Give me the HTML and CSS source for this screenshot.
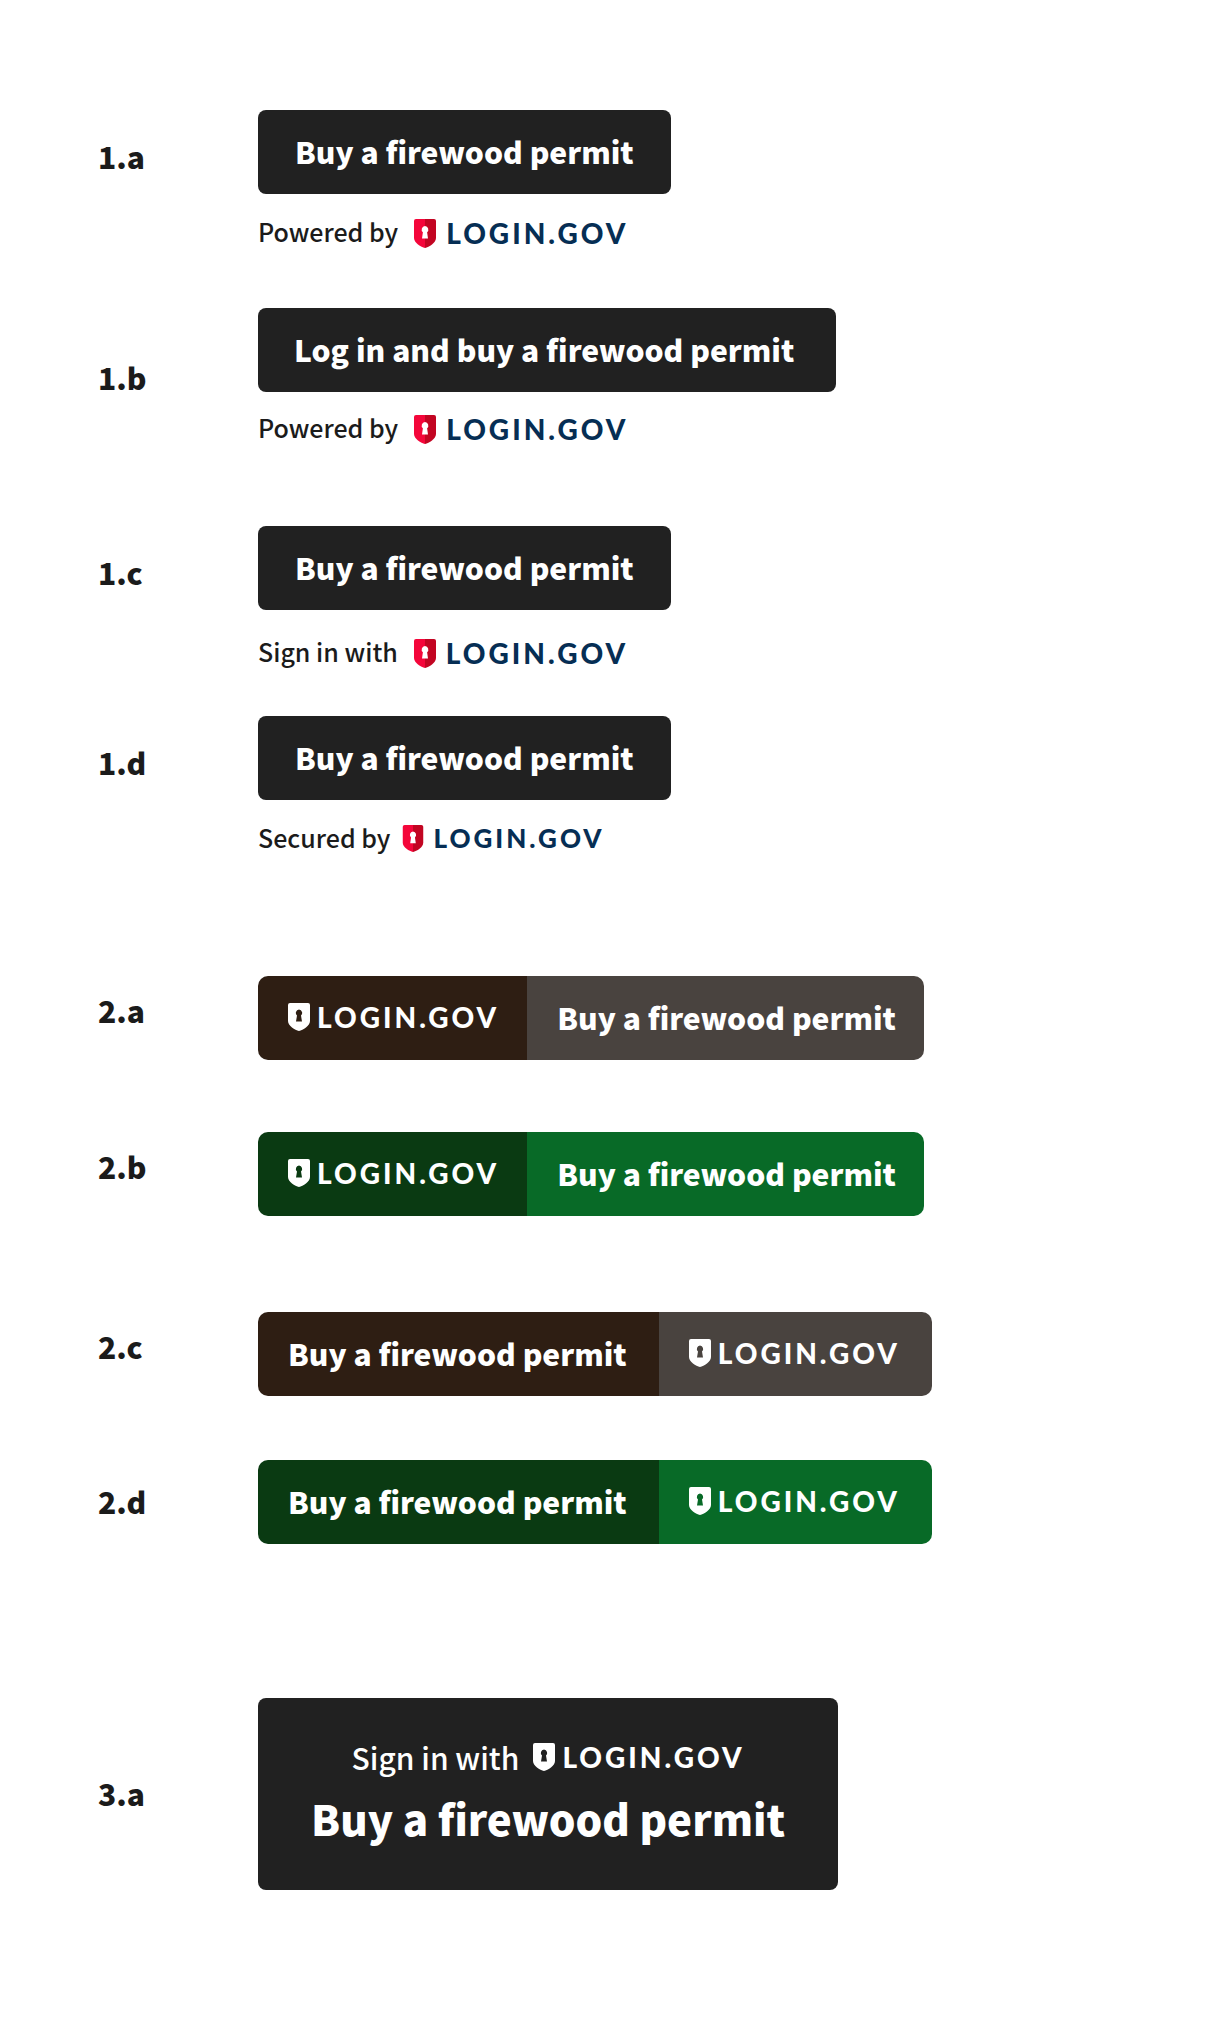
FILE: index.html
```html
<!DOCTYPE html>
<html lang="en">
<head>
  <meta charset="utf-8">
  <meta name="viewport" content="width=device-width, initial-scale=1">
  <title>Login.gov button variations</title>
  <link rel="stylesheet" href="styles.css">
</head>
<body>
  <svg class="sprite" aria-hidden="true">
    <symbol id="shield-color" viewBox="0 0 22 29">
      <path fill="#f4063a" d="M2 0H11V29C7 28 0 24 0 19V2Q0 0 2 0Z"/>
      <path fill="#c20522" d="M11 0H20Q22 0 22 2V19C22 24 15 28 11 29Z"/>
      <path fill="#fff" d="M11 7A3.6 3.6 0 0 0 8.9 13.3L8 19.5H14L13.1 13.3A3.6 3.6 0 0 0 11 7Z"/>
    </symbol>
    <symbol id="shield-white" viewBox="0 0 22 28">
      <path fill="#fff" fill-rule="evenodd" d="M2 0H20Q22 0 22 2V18C22 23 15 27 11 28C7 27 0 23 0 18V2Q0 0 2 0ZM11 6.5A3.5 3.5 0 0 0 9 12.6L8 18.5H14L13 12.6A3.5 3.5 0 0 0 11 6.5Z"/>
    </symbol>
  </svg>

  <main class="samples">
    <section class="sample sample-1a">
      <h2 class="label">1.a</h2>
      <div class="variant">
        <button class="button" type="button">Buy a firewood permit</button>
        <p class="caption">Powered by
          <span class="brand"><svg class="shield" aria-hidden="true"><use href="#shield-color"/></svg><span class="wordmark">LOGIN.GOV</span></span>
        </p>
      </div>
    </section>

    <section class="sample sample-centered sample-1b">
      <h2 class="label">1.b</h2>
      <div class="variant">
        <button class="button button-long" type="button">Log in and buy a firewood permit</button>
        <p class="caption caption-close">Powered by
          <span class="brand"><svg class="shield" aria-hidden="true"><use href="#shield-color"/></svg><span class="wordmark">LOGIN.GOV</span></span>
        </p>
      </div>
    </section>

    <section class="sample sample-1c">
      <h2 class="label">1.c</h2>
      <div class="variant">
        <button class="button" type="button">Buy a firewood permit</button>
        <p class="caption caption-loose">Sign in with
          <span class="brand"><svg class="shield" aria-hidden="true"><use href="#shield-color"/></svg><span class="wordmark">LOGIN.GOV</span></span>
        </p>
      </div>
    </section>

    <section class="sample sample-1d">
      <h2 class="label">1.d</h2>
      <div class="variant">
        <button class="button" type="button">Buy a firewood permit</button>
        <p class="caption caption-small">Secured by
          <span class="brand"><svg class="shield" aria-hidden="true"><use href="#shield-color"/></svg><span class="wordmark">LOGIN.GOV</span></span>
        </p>
      </div>
    </section>

    <section class="sample sample-split sample-2a">
      <h2 class="label">2.a</h2>
      <button class="split brown" type="button">
        <span class="part part-brand part-dark"><span class="brand brand-white"><svg class="shield" aria-hidden="true"><use href="#shield-white"/></svg><span class="wordmark">LOGIN.GOV</span></span></span>
        <span class="part part-text part-light">Buy a firewood permit</span>
      </button>
    </section>

    <section class="sample sample-split sample-2b">
      <h2 class="label">2.b</h2>
      <button class="split green" type="button">
        <span class="part part-brand part-dark"><span class="brand brand-white"><svg class="shield" aria-hidden="true"><use href="#shield-white"/></svg><span class="wordmark">LOGIN.GOV</span></span></span>
        <span class="part part-text part-light">Buy a firewood permit</span>
      </button>
    </section>

    <section class="sample sample-split sample-2c">
      <h2 class="label">2.c</h2>
      <button class="split split-reverse brown" type="button">
        <span class="part part-text part-dark">Buy a firewood permit</span>
        <span class="part part-brand part-light"><span class="brand brand-white"><svg class="shield" aria-hidden="true"><use href="#shield-white"/></svg><span class="wordmark">LOGIN.GOV</span></span></span>
      </button>
    </section>

    <section class="sample sample-centered sample-2d">
      <h2 class="label">2.d</h2>
      <button class="split split-reverse green" type="button">
        <span class="part part-text part-dark">Buy a firewood permit</span>
        <span class="part part-brand part-light"><span class="brand brand-white"><svg class="shield" aria-hidden="true"><use href="#shield-white"/></svg><span class="wordmark">LOGIN.GOV</span></span></span>
      </button>
    </section>

    <section class="sample sample-centered">
      <h2 class="label">3.a</h2>
      <button class="button-stacked" type="button">
        <span class="sign-in"><span class="sign-in-text">Sign in with</span>
          <span class="brand brand-white"><svg class="shield" aria-hidden="true"><use href="#shield-white"/></svg><span class="wordmark">LOGIN.GOV</span></span>
        </span>
        <span class="stacked-title">Buy a firewood permit</span>
      </button>
    </section>
  </main>
</body>
</html>
```

FILE: styles.css
```css
* {
  box-sizing: border-box;
}

body {
  margin: 0;
  background: #fff;
  color: #1b1b1b;
  font-family: "Noto Sans CJK SC", "Open Sans", sans-serif;
}

.sprite {
  display: none;
}

.samples {
  padding: 110px 98px 148px;
}

/* One labelled row per variation */
.sample {
  display: grid;
  grid-template-columns: 160px auto;
  justify-content: start;
  align-items: start;
}

.sample-centered { align-items: center; }

.sample-1a { margin-bottom: 57px; }
.sample-1b { margin-bottom: 79px; }
.sample-1c { margin-bottom: 45px; }
.sample-1d { margin-bottom: 120px; }
.sample-2a { margin-bottom: 72px; }
.sample-2b { margin-bottom: 96px; }
.sample-2c { margin-bottom: 64px; }
.sample-2d { margin-bottom: 154px; }

.label {
  margin: 0;
  padding-top: 24px;
  font-size: 30px;
  font-weight: 900;
  line-height: 44px;
}

.sample-centered .label { padding: 0 0 2px; }
.sample-split .label { padding-top: 12px; }

button {
  border: 0;
  color: #fff;
  font-family: inherit;
  font-weight: 900;
  cursor: pointer;
}

.button {
  display: block;
  padding: 19px 37px 21px;
  border-radius: 8px;
  background: #212121;
  font-size: 30px;
  line-height: 44px;
}

.button-long {
  padding-right: 42px;
  padding-left: 36px;
}

/* Shield and wordmark */
.brand {
  display: inline-flex;
  align-items: center;
  gap: 10px;
  color: #062e54;
}

.shield {
  width: 22px;
  height: 29px;
}

.wordmark {
  font-family: Lato, sans-serif;
  font-size: 28px;
  font-weight: 900;
  line-height: 36px;
  letter-spacing: 3px;
}

.brand-white {
  gap: 7px;
  color: #fff;
}

.brand-white .shield {
  height: 28px;
}

.caption {
  display: flex;
  align-items: flex-start;
  gap: 16px;
  margin: 20px 0 0;
  font-size: 25px;
  font-weight: 500;
  line-height: 34px;
}

.caption .brand { padding-top: 1px; }

.caption-close { margin-top: 18px; }
.caption-loose { margin-top: 24px; }

.caption-small { gap: 12px; }
.caption-small .brand { gap: 9px; padding-top: 0; }
.caption-small .shield { height: 27px; }
.caption-small .wordmark { font-size: 26px; }

/* Two-tone buttons */
.split {
  display: flex;
  padding: 0;
  overflow: hidden;
  border-radius: 10px;
  background: none;
  font-size: 30px;
  line-height: 44px;
}

.part {
  display: flex;
  align-items: center;
  height: 84px;
  padding: 0 28px 2px 30px;
}

.brown .part-dark { background: #2e1e13; }
.brown .part-light { background: #49433f; }
.green .part-dark { background: #0a3a12; }
.green .part-light { background: #086a27; }

.split-reverse .part { padding-right: 32px; }

/* Two-line button */
.button-stacked {
  display: flex;
  flex-direction: column;
  align-items: center;
  padding: 40px 53px 42px;
  border-radius: 8px;
  background: #212121;
}

.sign-in {
  display: flex;
  align-items: center;
  gap: 14px;
  font-size: 30px;
  font-weight: 500;
}

.sign-in-text {
  line-height: 38px;
}

.stacked-title {
  margin-top: 12px;
  font-size: 42px;
  line-height: 60px;
}
```
